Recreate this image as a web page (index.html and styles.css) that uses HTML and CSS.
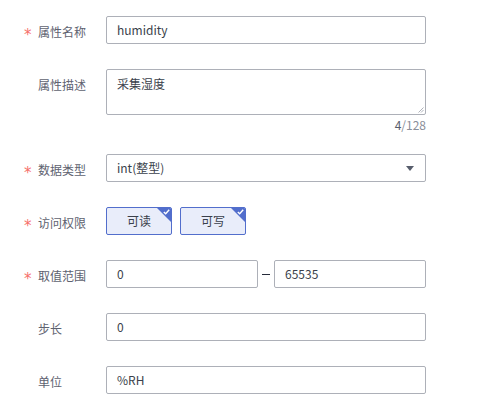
FILE: index.html
```html
<!DOCTYPE html>
<html>
<head>
<meta charset="utf-8">
<link rel="stylesheet" href="styles.css">
</head>
<body>
<form class="form">
  <div class="row">
    <label class="label"><span class="star">*</span>属性名称</label>
    <div class="control"><div class="input">humidity</div></div>
  </div>
  <div class="row row-area">
    <label class="label"><span class="star hidden">*</span>属性描述</label>
    <div class="control">
      <div class="textarea">采集湿度
        <svg class="grip" width="7" height="7" viewBox="0 0 7 7"><path d="M6.5 1.5L1.5 6.5M6.5 4L4 6.5" stroke="#9a9ea8" stroke-width="0.8" fill="none"/></svg>
      </div>
      <div class="counter"><span class="count">4</span>/128</div>
    </div>
  </div>
  <div class="row">
    <label class="label"><span class="star">*</span>数据类型</label>
    <div class="control">
      <div class="input select">int(整型)
        <svg class="arrow" width="8" height="5" viewBox="0 0 8 5"><path d="M0 0H8L4 5Z" fill="#575d6c"/></svg>
      </div>
    </div>
  </div>
  <div class="row">
    <label class="label"><span class="star">*</span>访问权限</label>
    <div class="control checks">
      <div class="check">可读<span class="corner"><svg width="7" height="6" viewBox="0 0 7 6"><path d="M0.8 3L2.7 4.8L6.2 0.8" stroke="#fff" stroke-width="1.4" fill="none"/></svg></span></div>
      <div class="check">可写<span class="corner"><svg width="7" height="6" viewBox="0 0 7 6"><path d="M0.8 3L2.7 4.8L6.2 0.8" stroke="#fff" stroke-width="1.4" fill="none"/></svg></span></div>
    </div>
  </div>
  <div class="row">
    <label class="label"><span class="star">*</span>取值范围</label>
    <div class="control range">
      <div class="input half">0</div>
      <span class="dash"></span>
      <div class="input half">65535</div>
    </div>
  </div>
  <div class="row">
    <label class="label"><span class="star hidden">*</span>步长</label>
    <div class="control"><div class="input">0</div></div>
  </div>
  <div class="row">
    <label class="label"><span class="star hidden">*</span>单位</label>
    <div class="control"><div class="input">%RH</div></div>
  </div>
</form>
</body>
</html>
```
FILE: styles.css
```css
html, body {
  margin: 0;
  padding: 0;
  background: #fff;
}
body {
  font-family: "Noto Sans CJK SC", "Noto Sans", sans-serif;
  font-size: 12px;
  color: #3a3f4b;
}
.form {
  padding-top: 16px;
  display: flex;
  flex-direction: column;
  gap: 25px;
}
.row {
  display: flex;
  align-items: flex-start;
}
.row-area {
  margin-bottom: -6px;
}
.label {
  width: 81px;
  padding-left: 25px;
  padding-top: 6px;
  line-height: 20px;
  height: 20px;
  color: #5e6270;
  display: flex;
  align-items: center;
}
.star {
  color: #f66f6a;
  width: 13px;
  font-family: "DejaVu Sans", sans-serif;
  font-size: 15px;
  line-height: 20px;
  height: 20px;
  position: relative;
  top: 3px;
  left: -1px;
}
.star.hidden {
  visibility: hidden;
}
.control {
  width: 320px;
}
.input {
  box-sizing: border-box;
  height: 28px;
  border: 1px solid #adb0b8;
  border-radius: 2px;
  padding: 0 10px;
  line-height: 26px;
  color: #3a3f4b;
}
.select {
  position: relative;
}
.arrow {
  position: absolute;
  right: 11px;
  top: 11px;
}
.textarea {
  box-sizing: border-box;
  height: 46px;
  border: 1px solid #adb0b8;
  border-radius: 2px;
  padding: 4px 10px;
  line-height: 20px;
  position: relative;
}
.grip {
  position: absolute;
  right: 1px;
  bottom: 1px;
}
.counter {
  text-align: right;
  line-height: 20px;
  color: #8a8e99;
  height: 20px;
}
.count {
  color: #575d6c;
}
.checks {
  display: flex;
  gap: 8px;
}
.check {
  position: relative;
  box-sizing: border-box;
  width: 66px;
  height: 28px;
  border: 1px solid #526ecc;
  border-radius: 2px;
  background: #e9edfa;
  text-align: center;
  line-height: 26px;
  color: #3a3f4b;
  overflow: hidden;
}
.corner {
  position: absolute;
  top: 0;
  right: 0;
  width: 0;
  height: 0;
  border-top: 14px solid #526ecc;
  border-left: 14px solid transparent;
}
.corner svg {
  position: absolute;
  top: -13px;
  right: 1px;
}
.range {
  display: flex;
  align-items: center;
}
.half {
  width: 152px;
}
.dash {
  width: 16px;
  display: flex;
  justify-content: center;
}
.dash::before {
  content: "";
  width: 8px;
  height: 1px;
  background: #252b3a;
}
```
